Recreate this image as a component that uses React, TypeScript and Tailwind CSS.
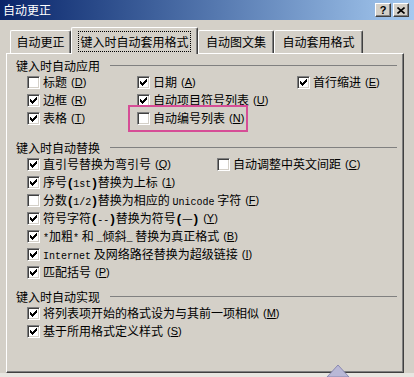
import React from "react";

const CHECK =
  "M6 0h1v1h-1z M5 1h2v1h-2z M0 2h1v1h-1z M4 2h3v1h-3z M0 3h2v1h-2z M3 3h3v1h-3z M0 4h5v1h-5z M1 5h3v1h-3z M2 6h1v1h-1z";

function Box({ checked }: { checked?: boolean }) {
  return (
    <span className="inline-flex h-[13px] w-[13px] shrink-0 items-center justify-center border border-t-[#808080] border-l-[#808080] border-r-white border-b-white bg-white shadow-[inset_1px_1px_0_#404040,inset_-1px_-1px_0_#d4d0c8]">
      {checked && (
        <svg width="7" height="7" viewBox="0 0 7 7" shapeRendering="crispEdges">
          <path d={CHECK} fill="#000" />
        </svg>
      )}
    </span>
  );
}

function Key({ k }: { k: string }) {
  return (
    <span className="ml-[4px] font-['Liberation_Sans',sans-serif] text-[11px]">
      (<u>{k}</u>)
    </span>
  );
}

function M({ children }: { children: React.ReactNode }) {
  return <span className="font-['Liberation_Mono',monospace] text-[10px]">{children}</span>;
}

function P({ children }: { children: React.ReactNode }) {
  return <b className="mx-[1px] font-['Liberation_Sans',sans-serif] text-[13px] leading-none">{children}</b>;
}

function Check({
  checked,
  k,
  children,
  className = "",
}: {
  checked?: boolean;
  k: string;
  children: React.ReactNode;
  className?: string;
}) {
  return (
    <div className={"relative flex h-[18px] items-center whitespace-nowrap " + className}>
      <Box checked={checked} />
      <span className="ml-[3px]">{children}</span>
      <Key k={k} />
    </div>
  );
}

function GroupLabel({ text, className = "" }: { text: string; className?: string }) {
  return (
    <div className={"flex h-[15px] items-center pl-[9px] " + className}>
      <span className="leading-[15px]">{text}</span>
      <div className="ml-[10px] mr-[6px] h-[2px] flex-1 border-t border-[#808080] border-b-white" />
    </div>
  );
}

function Tab({ label, w }: { label: string; w: string }) {
  return (
    <div
      className={
        "flex h-[23px] items-center justify-center rounded-t-[2px] border-l border-t border-white border-r-[#404040] border-r shadow-[inset_-1px_0_0_#808080] " +
        w
      }
    >
      {label}
    </div>
  );
}

export default function App() {
  return (
    <div className="relative h-[377px] w-[414px] overflow-hidden bg-[#d4d0c8] font-['Noto_Sans_CJK_SC','Liberation_Sans',sans-serif] text-[12px] text-black">
      {/* title bar */}
      <div className="flex h-[20px] items-center justify-between bg-linear-to-r from-[#0a246a] to-[#a6caf0] pl-[3px] pr-[5px]">
        <span className="text-[12px] text-white">自动更正</span>
        <div className="flex gap-[2px]">
          <span className="flex h-[14px] w-[16px] items-center justify-center border border-white border-r-[#404040] border-b-[#404040] bg-[#d4d0c8] font-['Liberation_Sans',sans-serif] text-[11px] font-bold leading-none shadow-[inset_-1px_-1px_0_#808080]">
            ?
          </span>
          <span className="flex h-[14px] w-[16px] items-center justify-center border border-white border-r-[#404040] border-b-[#404040] bg-[#d4d0c8] shadow-[inset_-1px_-1px_0_#808080]">
            <svg width="8" height="7" viewBox="0 0 8 7">
              <path d="M0.5 0.5 L7.5 6.5 M7.5 0.5 L0.5 6.5" stroke="#000" strokeWidth="1.6" />
            </svg>
          </span>
        </div>
      </div>

      {/* tabs */}
      <div className="flex h-[33px] items-end pl-[10px]">
        <Tab label="自动更正" w="w-[61px]" />
        <div className="relative z-10 -mb-[1px] flex h-[27px] w-[127px] items-center justify-center rounded-t-[2px] border-l border-t border-white border-r border-r-[#404040] bg-[#d4d0c8] shadow-[inset_-1px_0_0_#808080]">
          <span className="border border-dotted border-black px-[1px] leading-[19px]">键入时自动套用格式</span>
        </div>
        <Tab label="自动图文集" w="w-[76px]" />
        <Tab label="自动套用格式" w="w-[89px]" />
      </div>

      {/* panel */}
      <div className="ml-[6px] h-[320px] w-[398px] border-l border-t border-white border-r border-b border-r-[#404040] border-b-[#404040] pt-[4px] shadow-[inset_-1px_-1px_0_#808080]">
        <GroupLabel text="键入时自动应用" />
        <div className="grid grid-cols-[110px_160px_1fr] pl-[20px]">
          <Check k="D">标题</Check>
          <Check k="A" checked>日期</Check>
          <Check k="E" checked>首行缩进</Check>
          <Check k="R" checked>边框</Check>
          <Check k="U" checked>自动项目符号列表</Check>
          <div />
          <Check k="T" checked>表格</Check>
          <Check k="N">
            自动编号列表
            <span className="pointer-events-none absolute -left-[9px] -top-[4px] h-[27px] w-[120px] border-2 border-[#d64d96]" />
          </Check>
          <div />
        </div>

        <GroupLabel text="键入时自动替换" className="mt-[13px]" />
        <div className="pl-[20px]">
          <div className="flex">
            <Check k="Q" checked className="w-[190px]">直引号替换为弯引号</Check>
            <Check k="C">自动调整中英文间距</Check>
          </div>
          <Check k="1" checked>
            序号<P>(</P><M>1st</M><P>)</P>替换为上标
          </Check>
          <Check k="F">
            分数<P>(</P><M>1/2</M><P>)</P>替换为相应的 <M>Unicode</M> 字符
          </Check>
          <Check k="Y" checked>
            符号字符<P>(</P><M>--</M><P>)</P>替换为符号<P>(</P>—<P>)</P>
          </Check>
          <Check k="B" checked>
            <M>*</M>加粗<M>*</M> 和 <M>_</M>倾斜<M>_</M> 替换为真正格式
          </Check>
          <Check k="I" checked>
            <M>Internet</M> 及网络路径替换为超级链接
          </Check>
          <Check k="P" checked>匹配括号</Check>
        </div>

        <GroupLabel text="键入时自动实现" className="mt-[8px]" />
        <div className="pl-[20px]">
          <Check k="M" checked>将列表项开始的格式设为与其前一项相似</Check>
          <Check k="S" checked>基于所用格式定义样式</Check>
        </div>
      </div>

      <div className="h-[4px] bg-[#e8e6e1]" />

      {/* watermark corner */}
      <svg className="absolute left-[326px] top-[364px]" width="24" height="13" viewBox="0 0 24 13">
        <path d="M1 13 L12 1 L23 13 Z" fill="#b9b8d6" stroke="#8a89b0" strokeWidth="1" />
      </svg>
    </div>
  );
}
